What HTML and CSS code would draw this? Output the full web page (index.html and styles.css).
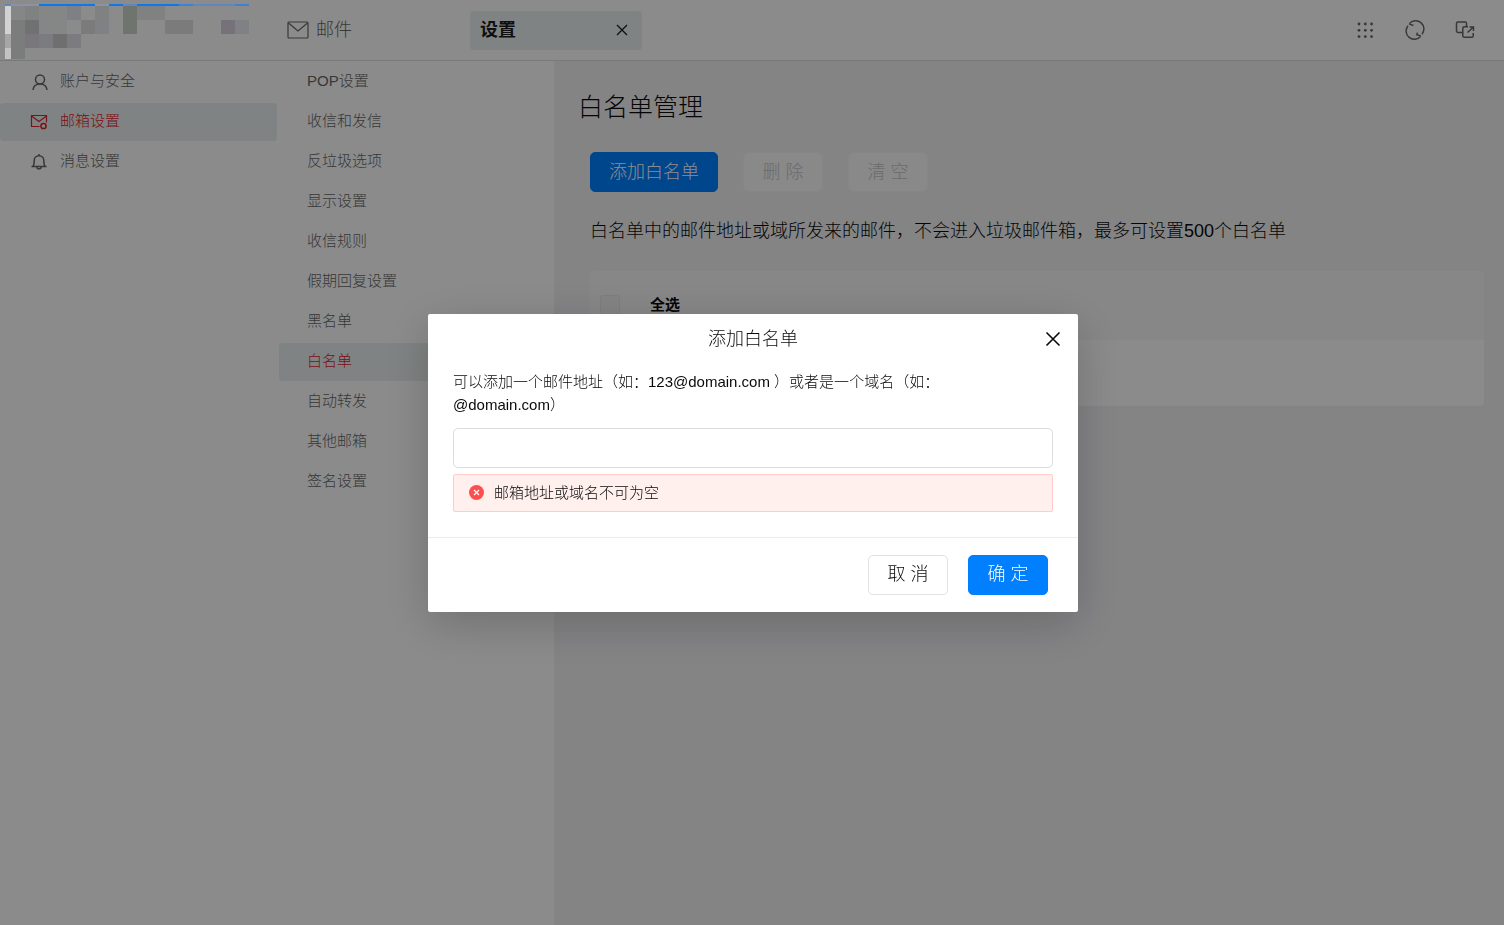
FILE: index.html
```html
<!DOCTYPE html>
<html lang="zh-CN">
<head>
<meta charset="utf-8">
<meta name="viewport" content="width=device-width, initial-scale=1">
<title>白名单管理</title>
<link rel="stylesheet" href="styles.css">
</head>
<body>
<div class="app">
  <header class="topbar">
    <div class="brand">
      <svg class="brand-mark" width="250" height="60" viewBox="0 0 250 60" shape-rendering="crispEdges" aria-hidden="true">
        <path fill="#5f86c0" d="M5 4h6v2H5zM53 4h14v2H53zM123 4h14v2h-14zM179 4h70v2h-70z"/>
        <path fill="#8b93a3" d="M11 4h28v2H11zM95 4h14v2H95z"/>
        <path fill="#0b78ec" d="M39 4h56v2H39zM109 4h14v2h-14zM137 4h42v2h-42z"/>
        <path fill="#3f80d2" d="M179 4h14v2h-14zM235 4h14v2h-14z"/>
        <path fill="#d2d2d2" d="M5 6h6v28H5z"/>
        <path fill="#a6a6a6" d="M5 34h6v14H5z"/>
        <path fill="#c3c3c5" d="M5 48h6v11H5z"/>
        <path fill="#858786" d="M11 6h14v14H11zM39 6h28v14H39zM39 20h28v14H39z"/>
        <path fill="#7f8281" d="M25 6h14v14H25zM95 6h14v14H95zM137 6h28v14h-28z"/>
        <path fill="#7f8086" d="M67 6h14v14H67z"/>
        <path fill="#7b7d7c" d="M11 20h14v39H11z"/>
        <path fill="#6f7172" d="M25 20h14v14H25z"/>
        <path fill="#7b7b7c" d="M81 20h14v14H81zM165 20h28v14h-28z"/>
        <path fill="#7f8184" d="M95 20h14v14H95zM235 20h14v14h-14z"/>
        <path fill="#6f746e" d="M123 6h14v28h-14z"/>
        <path fill="#77717a" d="M221 20h14v14h-14z"/>
        <path fill="#7a777c" d="M25 34h14v14H25z"/>
        <path fill="#7c7c80" d="M39 34h14v14H39zM67 34h14v14H67z"/>
        <path fill="#6f6f70" d="M53 34h14v14H53z"/>
      </svg>
    </div>
    <nav class="tabs">
      <a class="tab" href="#mail">
        <svg width="22" height="18" viewBox="0 0 22 18" fill="none" stroke="currentColor" stroke-width="1.2" aria-hidden="true"><rect x="1" y="1" width="20" height="16" rx="1"/><path d="M1.500 2 11 10 20.500 2"/></svg>
        <span>邮件</span>
      </a>
      <div class="tab tab-active">
        <span>设置</span>
        <button class="icon-button" type="button" aria-label="关闭设置"><svg width="12" height="12" viewBox="0 0 12 12" fill="none" stroke="currentColor" stroke-width="1.300"><path d="M1 1l10 10M11 1 1 11"/></svg></button>
      </div>
    </nav>
    <div class="tools">
      <button class="icon-button" type="button" aria-label="应用"><svg width="20" height="20" viewBox="0 0 20 20" fill="currentColor"><circle cx="4" cy="4" r="1.400"/><circle cx="10.300" cy="4" r="1.400"/><circle cx="16.600" cy="4" r="1.400"/><circle cx="4" cy="10.300" r="1.400"/><circle cx="10.300" cy="10.300" r="1.400"/><circle cx="16.600" cy="10.300" r="1.400"/><circle cx="4" cy="16.600" r="1.400"/><circle cx="10.300" cy="16.600" r="1.400"/><circle cx="16.600" cy="16.600" r="1.400"/></svg></button>
      <button class="icon-button" type="button" aria-label="刷新"><svg width="20" height="20" viewBox="0 0 20 20" fill="none" stroke="currentColor" stroke-width="1.400"><path d="M4.300 3.700A8.200 8.200 0 0 1 17 14.200M15.700 16.300A8.200 8.200 0 0 1 3 5.800M4 3.900l4.400 1.600M16 16.100l-4.400-1.600M12.400 12.600l-.6 2.100 2.200.5"/></svg></button>
      <button class="icon-button" type="button" aria-label="新窗口打开"><svg width="20" height="20" viewBox="0 0 20 20" fill="none" stroke="currentColor" stroke-width="1.500"><path d="M7.500 12.500H3A1.500 1.500 0 0 1 1.500 11V3.500A1.500 1.500 0 0 1 3 2h7a1.500 1.500 0 0 1 1.500 1.500v3M13 6.800H9.300a1.500 1.500 0 0 0-1.500 1.500v7.400a1.500 1.500 0 0 0 1.500 1.500h7.400a1.500 1.500 0 0 0 1.500-1.500V13M12.500 12.500l6-5.500M14.500 7h4v4"/></svg></button>
    </div>
  </header>

  <div class="workspace">
    <nav class="menu menu-main">
      <a class="menu-item" href="#account"><svg width="18" height="18" viewBox="0 0 18 18" fill="none" stroke="currentColor" stroke-width="1.500" aria-hidden="true"><circle cx="10" cy="6.500" r="4.500"/><path d="M3 17c.4-3.600 2.600-6 7-6s6.600 2.400 7 6"/></svg><span>账户与安全</span></a>
      <a class="menu-item menu-item-active" href="#mailbox"><svg width="18" height="18" viewBox="0 0 18 18" fill="none" stroke="currentColor" stroke-width="1.200" aria-hidden="true"><path d="M9.500 13.500H1.500V2.500h15v7M1.500 3 9 8.500 16.500 3"/><circle cx="13.500" cy="13" r="2.600" stroke-width="1.500"/></svg><span>邮箱设置</span></a>
      <a class="menu-item" href="#message"><svg width="18" height="18" viewBox="0 0 18 18" fill="none" stroke="currentColor" stroke-width="1.500" aria-hidden="true"><path d="M1.500 13.500h15M3 13.200C4.200 12 4.200 10.500 4.200 7.500a4.800 4.800 0 0 1 9.600 0c0 3 0 4.500 1.200 5.700M9 2.500V1M7 14.200a2 1.600 0 0 0 4 0"/></svg><span>消息设置</span></a>
    </nav>
    <nav class="menu menu-sub">
      <a class="menu-item" href="#pop">POP设置</a>
      <a class="menu-item" href="#transfer">收信和发信</a>
      <a class="menu-item" href="#antispam">反垃圾选项</a>
      <a class="menu-item" href="#display">显示设置</a>
      <a class="menu-item" href="#rules">收信规则</a>
      <a class="menu-item" href="#vacation">假期回复设置</a>
      <a class="menu-item" href="#blacklist">黑名单</a>
      <a class="menu-item menu-item-active" href="#whitelist">白名单</a>
      <a class="menu-item" href="#forward">自动转发</a>
      <a class="menu-item" href="#others">其他邮箱</a>
      <a class="menu-item" href="#signature">签名设置</a>
    </nav>
    <main class="content">
      <h1 class="page-title">白名单管理</h1>
      <div class="actions">
        <button class="button button-primary" type="button">添加白名单</button>
        <button class="button" type="button" disabled>删 除</button>
        <button class="button" type="button" disabled>清 空</button>
      </div>
      <p class="hint">白名单中的邮件地址或域所发来的邮件，不会进入垃圾邮件箱，最多可设置500个白名单</p>
      <section class="list">
        <div class="list-head">
          <input class="checkbox" type="checkbox" id="select-all">
          <label for="select-all">全选</label>
        </div>
        <div class="list-body"></div>
      </section>
    </main>
  </div>
</div>

<div class="overlay">
  <form class="dialog" role="dialog" aria-modal="true" aria-labelledby="dialog-title">
    <div class="dialog-head">
      <h2 class="dialog-title" id="dialog-title">添加白名单</h2>
      <button class="icon-button dialog-close" type="button" aria-label="关闭"><svg width="16" height="16" viewBox="0 0 16 16" fill="none" stroke="currentColor" stroke-width="1.600"><path d="M1.500 1.500l13 13M14.500 1.500l-13 13"/></svg></button>
    </div>
    <div class="dialog-body">
      <label class="dialog-label" for="address">可以添加一个邮件地址（如：123@domain.com ）或者是一个域名（如：<br>@domain.com）</label>
      <input class="text-input" id="address" type="text" aria-describedby="address-error">
      <div class="alert" id="address-error" role="alert">
        <svg width="15" height="15" viewBox="0 0 15 15" aria-hidden="true"><circle cx="7.500" cy="7.500" r="7.500" fill="#ff4d4f"/><path d="M5 5l5 5M10 5l-5 5" stroke="#fff" stroke-width="1.200"/></svg>
        <span>邮箱地址或域名不可为空</span>
      </div>
    </div>
    <div class="dialog-foot">
      <button class="button" type="button">取 消</button>
      <button class="button button-primary" type="submit">确 定</button>
    </div>
  </form>
</div>
</body>
</html>
```

FILE: styles.css
```css
* {
  box-sizing: border-box;
}

body {
  margin: 0;
  color: #0a0a0a;
  background: #f0f0f3;
  font-family: "Liberation Sans", "Noto Sans CJK SC", sans-serif;
  font-size: 15px;
  font-weight: 300;
  line-height: 23px;
}

a {
  color: inherit;
  text-decoration: none;
}

button,
input {
  font: inherit;
}

svg {
  display: block;
  flex: none;
}

.app {
  display: flex;
  flex-direction: column;
  min-height: 100vh;
}

/* Top bar */

.topbar {
  display: flex;
  align-items: center;
  height: 61px;
  background: #fdfdfd;
  border-bottom: 1px solid #dcdcde;
}

.brand {
  flex: none;
  width: 277px;
}

.brand-mark {
  position: relative;
  z-index: 2;
}

.tabs {
  display: flex;
  flex: 1;
}

.tab {
  display: flex;
  align-items: center;
  gap: 7px;
  width: 193px;
  height: 39px;
  padding: 0 10px;
  color: #666;
  font-size: 18px;
}

.tab-active {
  justify-content: space-between;
  width: 172px;
  padding-right: 14px;
  color: #1c1c1c;
  background: #e9eeee;
  border-radius: 4px;
  font-weight: 700;
}

.icon-button {
  padding: 0;
  color: inherit;
  background: none;
  border: 0;
}

.tools {
  display: flex;
  gap: 30px;
  padding-right: 29px;
  color: #666;
}

/* Side menus */

.workspace {
  display: flex;
  flex: 1;
}

.menu {
  display: flex;
  flex: none;
  flex-direction: column;
  gap: 2px;
  width: 277px;
  padding-top: 2px;
  color: #666;
  background: #fdfdfd;
}

.menu-sub {
  padding-left: 2px;
}

.menu-item {
  display: flex;
  align-items: center;
  gap: 12px;
  height: 38px;
  padding: 0 30px 4px;
  border-radius: 4px;
}

.menu-item svg {
  margin-top: 4px;
}

.menu-sub .menu-item {
  padding-left: 28px;
}

.menu-item-active {
  color: #e0222c;
  background: #e9eeee;
}

/* Page content */

.content {
  flex: 1;
  min-width: 0;
  padding: 26px 20px 25px 36px;
}

.page-title {
  margin: 0 0 25px -12px;
  font-size: 25px;
  font-weight: inherit;
  line-height: 40px;
}

.actions {
  display: flex;
  align-items: center;
  gap: 25px;
}

.button {
  min-width: 80px;
  height: 40px;
  padding: 0 18px;
  color: #0a0a0a;
  background: #fff;
  border: 1px solid #e2e2e2;
  border-radius: 5px;
  font-size: 18px;
}

.button:disabled {
  color: #c4c4c6;
  background: #f9f9f9;
  border-color: #f4f4f5;
}

.button-primary {
  color: #fff;
  background: #0080ff;
  border-color: #0080ff;
}

.hint {
  margin: 26px 0;
  font-size: 18px;
  line-height: 27px;
}

.list-head {
  display: flex;
  align-items: center;
  gap: 30px;
  height: 69px;
  padding: 0 10px 2px;
  background: #f6f6f6;
  border-radius: 4px 4px 0 0;
  font-weight: 700;
}

.list-body {
  height: 66px;
  background: #fdfdfd;
  border-radius: 0 0 4px 4px;
}

.checkbox {
  width: 20px;
  height: 20px;
  margin: 0;
  appearance: none;
  background: #f0f0f1;
  border: 1px solid #e6e6e8;
  border-radius: 3px;
}

/* Dialog */

.overlay {
  position: fixed;
  inset: 0;
  z-index: 1;
  display: grid;
  place-items: center;
  padding-left: 2px;
  background: rgba(0, 0, 0, 0.45);
}

.dialog {
  width: 650px;
  max-width: 100%;
  background: #fff;
  border-radius: 2px;
  box-shadow: 0 12px 48px rgba(0, 0, 0, 0.2);
}

.dialog-head {
  position: relative;
  padding: 13px 25px;
}

.dialog-title {
  margin: 0;
  font-size: 18px;
  font-weight: inherit;
  line-height: 24px;
  text-align: center;
}

.dialog-close {
  position: absolute;
  top: 17px;
  right: 17px;
}

.dialog-body {
  padding: 6px 25px 25px;
}

.dialog-label {
  display: block;
  margin-bottom: 12px;
}

.text-input {
  display: block;
  width: 100%;
  height: 40px;
  padding: 0 12px;
  border: 1px solid #dcdcdf;
  border-radius: 5px;
}

.alert {
  display: flex;
  align-items: center;
  gap: 10px;
  height: 38px;
  margin-top: 6px;
  padding: 0 15px;
  background: #fff0ee;
  border: 1px solid #ffccc7;
  border-radius: 2px;
}

.dialog-foot {
  display: flex;
  justify-content: flex-end;
  gap: 20px;
  padding: 17px 30px;
  border-top: 1px solid #ececec;
}
```
